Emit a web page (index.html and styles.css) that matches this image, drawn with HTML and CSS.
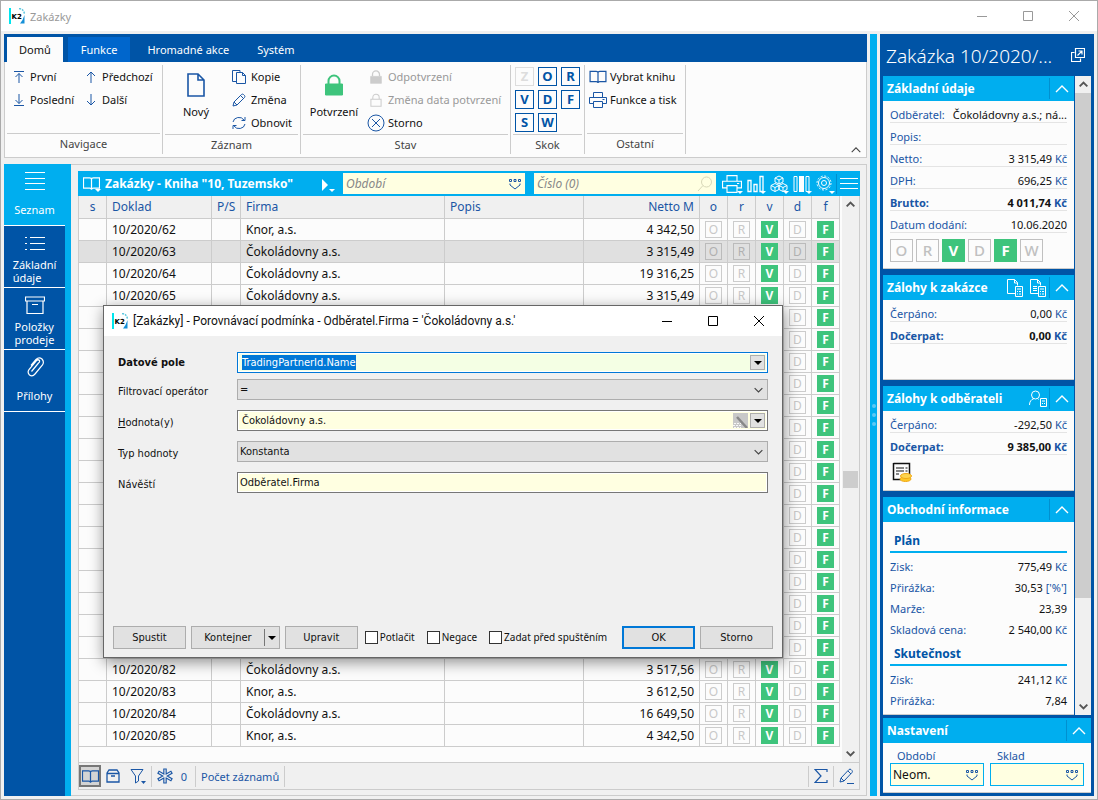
FILE: index.html
```html
<!DOCTYPE html>
<html lang="cs">
<head>
<meta charset="utf-8">
<title>Zakázky</title>
<link rel="stylesheet" href="styles.css">
</head>
<body>
<svg class="sprite" aria-hidden="true">
  <symbol id="k2" viewBox="0 0 16 16"><path d="M0 0h2v16H0z" fill="#00e5ee"/><path d="M10 0.5c3 .3 5 2 5.500 5.500" fill="none" stroke="#5cc8e0" stroke-width="1.500" stroke-dasharray="2 1"/><path d="M15.500 7v8.500H11l2.500-3.500z" fill="#1590d8"/><text x="2.500" y="10.500" font-size="7" font-weight="900" font-family="DejaVu Sans" fill="#000">K2</text></symbol>
  <symbol id="min" viewBox="0 0 12 12"><path d="M1 6.500h10"/></symbol>
  <symbol id="max" viewBox="0 0 12 12"><path d="M1.500 1.500h9v9h-9z"/></symbol>
  <symbol id="close" viewBox="0 0 12 12"><path d="M1 1l10 10M11 1L1 11"/></symbol>
  <symbol id="first" viewBox="0 0 12 14"><path d="M1 1.500h10M6 13V3.500M2.500 7L6 3.500 9.500 7"/></symbol>
  <symbol id="last" viewBox="0 0 12 14"><path d="M1 12.500h10M6 1v9.500M2.500 7L6 10.500 9.500 7"/></symbol>
  <symbol id="up" viewBox="0 0 12 14"><path d="M6 13V2M2 6l4-4 4 4"/></symbol>
  <symbol id="down" viewBox="0 0 12 14"><path d="M6 1v11M2 8l4 4 4-4"/></symbol>
  <symbol id="page" viewBox="0 0 18 24"><path d="M1 1h10l6 6v16H1zM11 1v6h6" stroke-width="1.600"/></symbol>
  <symbol id="copy" viewBox="0 0 14 14"><path d="M4 11.500H.5V.5H8V2M4.500 2.500h6l3 3v8h-9zM10.500 2.500v3h3"/></symbol>
  <symbol id="pencil" viewBox="0 0 14 14"><path d="M1 13l1-4L9.500 1.500q1-.8 2 0l1 1q.8 1 0 2L5 12zM8.500 2.500l3 3M2 9l3 3"/></symbol>
  <symbol id="refresh" viewBox="0 0 14 14"><path d="M1 6a6 5.500 0 0 1 11-2M13 1v3.500H9.500M13 8a6 5.500 0 0 1-11 2M1 13V9.500h3.500"/></symbol>
  <symbol id="lock" viewBox="0 0 20 22"><path d="M4.500 10V7a5.500 5.500 0 0 1 11 0v3" fill="none" stroke-width="2"/><path d="M1.500 10h17v11h-17z" fill="currentColor"/></symbol>
  <symbol id="lockopen" viewBox="0 0 20 22"><path d="M5 10V7a5 5 0 0 1 10 0v3M2 10h16v11H2z" stroke-width="1.600"/></symbol>
  <symbol id="cancel" viewBox="0 0 18 18"><circle cx="9" cy="9" r="8"/><path d="M5 5l8 8M13 5l-8 8"/></symbol>
  <symbol id="book" viewBox="0 0 18 15"><path d="M9 2.500V13M.5 1.500H7q2 0 2 1.500 0-1.500 2-1.500h6.500v11H11q-2 0-2 1.500 0-1.500-2-1.500H.5z" stroke-width="1.300"/></symbol>
  <symbol id="print" viewBox="0 0 18 16"><path d="M4.500 5V.5h9V5M4.500 11.500H.5V5.500h17v6h-4M4.500 9.500h9v6h-9zM13.500 7.500h2"/></symbol>
  <symbol id="lines" viewBox="0 0 20 20"><path d="M0 1.500h20M0 7.500h20M0 12.500h20M0 18.500h20"/></symbol>
  <symbol id="list" viewBox="0 0 20 20"><path d="M5 4.500h15M5 10.500h15M5 16.500h15M0 4.500h2M0 10.500h2M0 16.500h2"/></symbol>
  <symbol id="box" viewBox="0 0 20 20"><path d="M.5 2h19v4H.5zM2 6v12.500h16V6M7 9.500h6" stroke-width="1.200"/></symbol>
  <symbol id="crate" viewBox="0 0 14 14"><path d="M1 4l2-3h8l2 3v9H1zM1 4.500h12M5 7h4" stroke-width="1.300"/></symbol>
  <symbol id="clip" viewBox="0 0 18 20"><path d="M5.500 14.500l7-8.500q1.500-1 1-2.500-1.500-1.500-3 0L3 12.500q-2 3 .5 5.500 3 2 5.500-1l7.500-9q2-3-.5-6-3-2.500-6 .500L5 8.500" stroke-width="1.200"/></symbol>
  <symbol id="pick" viewBox="0 0 14 12"><path d="M1.500 1.500h2v2h-2zM6 1.500h2v2H6zM10.500 1.500h2v2h-2z" fill="none" stroke="#1a56a5"/><path d="M2 5.500V7l5 4 5-4V5.500" fill="none" stroke="#1a56a5"/></symbol>
  <symbol id="search" viewBox="0 0 16 16"><circle cx="9.500" cy="6" r="5"/><path d="M6 9.500L1 15"/></symbol>
  <symbol id="chart" viewBox="0 0 18 18"><path d="M1 5.500h3v11H1zM7 9.500h3v7H7zM13 1.500h3v15h-3z" stroke-width="1.300"/></symbol>
  <symbol id="cubes" viewBox="0 0 18 18"><path d="M9 1l4 2v4L9 9 5 7V3zM5 3l4 2 4-2M9 5v4M5 8.500l4 2v4l-4 2-4-2v-4zM1 10.500l4 2 4-2M5 12.500v4M13 8.500l4 2v4l-4 2-4-2v-4zM9 10.500l4 2 4-2M13 12.500v4"/></symbol>
  <symbol id="cols" viewBox="0 0 18 18"><path d="M1 1.500h3v15H1zM13 1.500h3v15h-3z"/><path d="M6 1h5v16H6z" fill="currentColor" stroke="none"/></symbol>
  <symbol id="gear" viewBox="0 0 18 18"><circle cx="8" cy="8" r="5.500"/><circle cx="8" cy="8" r="2.500"/><circle cx="8" cy="8" r="7" stroke-dasharray="2 1.670"/></symbol>
  <symbol id="chev" viewBox="0 0 14 8"><path d="M1 7l6-6 6 6"/></symbol>
  <symbol id="popout" viewBox="0 0 14 14"><path d="M3.500 4.500h-3v9h9v-3M4.500.500h9v9h-9zM6.500 7.500l4.500-4.500M7.500 3H11v3.500" stroke-width="1.200"/></symbol>
  <symbol id="doccalc" viewBox="0 0 17 18"><path d="M8 14.500H.5V.5h7l3 3v3M7.500.5v3.500h3M8.500 7.500h7v10h-7zM10 10h4M10 12.500h1M12 12.500h2M10 15h1M12 15h2"/></symbol>
  <symbol id="doccalc2" viewBox="0 0 17 18"><path d="M8 14.500H.5V.5h7l3 3v3M7.500.5v3.500h3M3 7.500h4M3 9.500h4M3 11.500h4M8.500 7.500h7v10h-7zM10 10h4M10 12.500h1M12 12.500h2M10 15h1M12 15h2"/></symbol>
  <symbol id="person" viewBox="0 0 18 18"><circle cx="6.500" cy="5" r="4"/><path d="M.5 15q0-5 4.500-6.500M8.500 8.500l1 1M11.500 8.500h6v8h-6zM13 11h3M13 13.500h1M15 13.500h1"/></symbol>
  <symbol id="bill" viewBox="0 0 20 20"><path d="M1.500 1.500h16V12M1.500 1v16.500H9" stroke="#111" fill="none" stroke-width="1.500"/><path d="M4 6h8M4 9h8M4 12h3M13.500 6h2M13.500 9h2" stroke="#111" stroke-width="1.200"/><ellipse cx="13.500" cy="17" rx="5.500" ry="2.500" fill="#fdc726" stroke="#f0a818"/><ellipse cx="14" cy="14" rx="5.500" ry="2.500" fill="#fdd44e" stroke="#f0a818"/></symbol>
  <symbol id="funnel" viewBox="0 0 16 16"><path d="M1 1.500h12L8.500 8v5l-3 2V8z"/><path d="M11 13h5l-2.500 3z" fill="currentColor" stroke="none"/></symbol>
  <symbol id="star" viewBox="0 0 16 16"><path d="M8 .5v15M1 4l14 8M15 4L1 12" stroke-width="3.500"/><path d="M8 1.500v13M2 4.500l12 7M14 4.500l-12 7" stroke="#f0f0f0" stroke-width="1.200"/></symbol>
  <symbol id="sigma" viewBox="0 0 14 14"><path d="M13 3V.5H1L7 7l-6 6.500h12V11" stroke-width="1.200"/></symbol>
  <symbol id="penline" viewBox="0 0 16 16"><path d="M1 14l1-4 8-8.500q1-.8 2 0l1 1q.8 1 0 2L5 13zM9 3l3 3M2 10l3 3M8 15.500h7"/></symbol>
  <symbol id="play" viewBox="0 0 14 14"><path d="M1 0l6 6-6 6z" fill="currentColor" stroke="none"/><path d="M8 10h6l-3 3z" fill="currentColor" stroke="none"/></symbol>
</svg>

<div class="window">
  <header class="titlebar">
    <svg class="i16"><use href="#k2"/></svg><span class="grow">Zakázky</span>
    <button class="wbtn" aria-label="Minimalizovat"><svg class="ico i12"><use href="#min"/></svg></button>
    <button class="wbtn" aria-label="Maximalizovat"><svg class="ico i12"><use href="#max"/></svg></button>
    <button class="wbtn" aria-label="Zavřít"><svg class="ico i12"><use href="#close"/></svg></button>
  </header>

  <div class="workspace">
    <div class="left">
      <section class="ribbon">
        <nav class="tabs">
          <button class="tab active">Domů</button><button class="tab func">Funkce</button><button class="tab">Hromadné akce</button><button class="tab">Systém</button>
        </nav>
        <div class="groups">
          <div class="group g-nav">
            <div class="tools">
              <div class="col"><button><svg class="ico ar"><use href="#first"/></svg>První</button><button><svg class="ico ar"><use href="#last"/></svg>Poslední</button></div>
              <div class="col"><button><svg class="ico ar"><use href="#up"/></svg>Předchozí</button><button><svg class="ico ar"><use href="#down"/></svg>Další</button></div>
            </div>
            <h3>Navigace</h3>
          </div>
          <div class="group g-rec">
            <div class="tools">
              <button class="big"><svg class="ico page"><use href="#page"/></svg>Nový</button>
              <div class="col"><button><svg class="ico i14"><use href="#copy"/></svg>Kopie</button><button><svg class="ico i14"><use href="#pencil"/></svg>Změna</button><button><svg class="ico i14"><use href="#refresh"/></svg>Obnovit</button></div>
            </div>
            <h3>Záznam</h3>
          </div>
          <div class="group g-state">
            <div class="tools">
              <button class="big"><svg class="ico biglock"><use href="#lock"/></svg>Potvrzení</button>
              <div class="col wide"><button disabled><svg class="ico i14"><use href="#lock"/></svg>Odpotvrzení</button><button disabled><svg class="ico i14"><use href="#lockopen"/></svg>Změna data potvrzení</button><button><svg class="ico i18"><use href="#cancel"/></svg>Storno</button></div>
            </div>
            <h3>Stav</h3>
          </div>
          <div class="group g-jump">
            <div class="letters"><button disabled>Z</button><button>O</button><button>R</button><button>V</button><button>D</button><button>F</button><button>S</button><button>W</button></div>
            <h3>Skok</h3>
          </div>
          <div class="group g-other">
            <div class="tools">
              <div class="col wide"><button><svg class="ico i14"><use href="#book"/></svg>Vybrat knihu</button><button><svg class="ico i18"><use href="#print"/></svg>Funkce a tisk</button></div>
            </div>
            <h3>Ostatní</h3>
          </div>
          <button class="fold" aria-label="Sbalit"><svg class="ico fchev"><use href="#chev"/></svg></button>
        </div>
      </section>

      <div class="content">
        <nav class="side">
          <button class="on"><svg class="ico"><use href="#lines"/></svg><span>Seznam</span></button>
          <button><svg class="ico"><use href="#list"/></svg><span>Základní<br>údaje</span></button>
          <button><svg class="ico"><use href="#box"/></svg><span>Položky<br>prodeje</span></button>
          <button><svg class="ico"><use href="#clip"/></svg><span>Přílohy</span></button>
        </nav>
        <main class="frame">
          <div class="bar">
            <button class="dd" aria-label="Kniha"><svg class="ico" width="17" height="15"><use href="#book"/></svg></button>
            <h1>Zakázky - Kniha "10, Tuzemsko"</h1>
            <button class="play" aria-label="Další kniha"><svg class="ico i14"><use href="#play"/></svg></button>
            <div class="find"><input type="text" placeholder="Období" aria-label="Období"><svg class="ico pick"><use href="#pick"/></svg></div>
            <div class="find"><input type="text" placeholder="Číslo (0)" aria-label="Číslo"><svg class="ico i16 glass"><use href="#search"/></svg></div>
            <div class="acts">
              <button class="dd" aria-label="Tisk"><svg class="ico" width="20" height="18"><use href="#print"/></svg></button>
              <button class="dd" aria-label="Graf"><svg class="ico i18"><use href="#chart"/></svg></button>
              <button class="dd" aria-label="Kostky"><svg class="ico i18"><use href="#cubes"/></svg></button>
              <button class="dd" aria-label="Sloupce"><svg class="ico i18"><use href="#cols"/></svg></button>
              <button class="dd" aria-label="Nastavení"><svg class="ico i18"><use href="#gear"/></svg></button>
              <button class="menu" aria-label="Nabídka"><i></i><i></i><i></i></button>
            </div>
          </div>
          <div class="grid">
            <div class="sheet">
              <table>
                <colgroup><col class="c-s"><col class="c-doc"><col class="c-ps"><col class="c-firm"><col><col class="c-net"><col class="c-b"><col class="c-b"><col class="c-b"><col class="c-b"><col class="c-b"></colgroup>
                <thead><tr><th class="mid">s</th><th>Doklad</th><th>P/S</th><th>Firma</th><th>Popis</th><th class="num">Netto M</th><th class="mid">o</th><th class="mid">r</th><th class="mid">v</th><th class="mid">d</th><th class="mid">f</th></tr></thead>
                <tbody id="rows"></tbody>
              </table>
            </div>
            <div class="scroll"><svg class="ico arr"><use href="#chev"/></svg><div class="track"><div class="sp1"></div><div class="thumb"></div><div class="sp2"></div></div><svg class="ico arr flip"><use href="#chev"/></svg></div>
          </div>
          <footer class="status">
            <button class="cur" aria-label="Kniha"><svg class="ico" width="17" height="15"><use href="#book"/></svg></button>
            <button aria-label="Kontejner"><svg class="ico i14"><use href="#crate"/></svg></button>
            <button class="filter" aria-label="Filtr"><svg class="ico i16"><use href="#funnel"/></svg></button>
            <div class="sep"></div>
            <svg class="ico i16"><use href="#star"/></svg><span class="zero">0</span>
            <div class="sep"></div>
            <span>Počet záznamů</span>
            <div class="sep"></div>
            <div class="grow"></div>
            <div class="sep"></div>
            <button aria-label="Součet"><svg class="ico i14"><use href="#sigma"/></svg></button>
            <div class="sep"></div>
            <button aria-label="Upravit"><svg class="ico i16"><use href="#penline"/></svg></button>
          </footer>
        </main>
      </div>
    </div>

    <div class="splitter"><i></i><i></i><i></i></div>

    <aside class="panel">
      <div class="phead"><h2>Zakázka 10/2020/...</h2><button aria-label="Otevřít"><svg class="ico i14"><use href="#popout"/></svg></button></div>
      <div class="pbody">
        <div class="cards">
          <section class="card s1">
            <header><h2>Základní údaje</h2><button aria-label="Sbalit"><svg class="ico chev"><use href="#chev"/></svg></button></header>
            <div class="in">
              <p><span>Odběratel:</span><b>Čokoládovny a.s.; ná...</b></p>
              <p><span>Popis:</span></p>
              <p><span>Netto:</span><b>3 315,49 <em>Kč</em></b></p>
              <p><span>DPH:</span><b>696,25 <em>Kč</em></b></p>
              <p class="strong"><span>Brutto:</span><b>4 011,74 <em>Kč</em></b></p>
              <p><span>Datum dodání:</span><b>10.06.2020</b></p>
              <div class="flags"><i>O</i><i>R</i><i class="ok">V</i><i>D</i><i class="ok">F</i><i>W</i></div>
            </div>
          </section>
          <section class="card s2">
            <header><h2>Zálohy k zakázce</h2><svg class="ico" width="17" height="18"><use href="#doccalc"/></svg><svg class="ico" width="17" height="18"><use href="#doccalc2"/></svg><button aria-label="Sbalit"><svg class="ico chev"><use href="#chev"/></svg></button></header>
            <div class="in">
              <p><span>Čerpáno:</span><b>0,00 <em>Kč</em></b></p>
              <p class="strong"><span>Dočerpat:</span><b>0,00 <em>Kč</em></b></p>
            </div>
          </section>
          <section class="card s3">
            <header><h2>Zálohy k odběrateli</h2><svg class="ico i18"><use href="#person"/></svg><button aria-label="Sbalit"><svg class="ico chev"><use href="#chev"/></svg></button></header>
            <div class="in">
              <p><span>Čerpáno:</span><b>-292,50 <em>Kč</em></b></p>
              <p class="strong"><span>Dočerpat:</span><b>9 385,00 <em>Kč</em></b></p>
              <svg class="ico bill"><use href="#bill"/></svg>
            </div>
          </section>
          <section class="card s4">
            <header><h2>Obchodní informace</h2><button aria-label="Sbalit"><svg class="ico chev"><use href="#chev"/></svg></button></header>
            <div class="in">
              <h3>Plán</h3>
              <p><span>Zisk:</span><b>775,49 <em>Kč</em></b></p>
              <p><span>Přirážka:</span><b>30,53 <em>['%']</em></b></p>
              <p><span>Marže:</span><b>23,39</b></p>
              <p><span>Skladová cena:</span><b>2 540,00 <em>Kč</em></b></p>
              <h3>Skutečnost</h3>
              <p><span>Zisk:</span><b>241,12 <em>Kč</em></b></p>
              <p><span>Přirážka:</span><b>7,84</b></p>
            </div>
          </section>
        </div>
        <div class="scroll pscroll"><svg class="ico arr"><use href="#chev"/></svg><div class="track"><div class="thumb"></div><div class="sp2"></div></div><svg class="ico arr flip"><use href="#chev"/></svg></div>
      </div>
      <section class="card setup">
        <header><h2>Nastavení</h2><button aria-label="Sbalit"><svg class="ico chev"><use href="#chev"/></svg></button></header>
        <div class="in two">
          <div class="opt"><label for="per">Období</label><div class="box"><input id="per" type="text" size="4" value="Neom."><svg class="ico pick"><use href="#pick"/></svg></div></div>
          <div class="opt"><label for="skl">Sklad</label><div class="box"><input id="skl" type="text" size="4"><svg class="ico pick"><use href="#pick"/></svg></div></div>
        </div>
      </section>
    </aside>
  </div>

  <form class="dialog" role="dialog" aria-labelledby="dt" onsubmit="return false">
    <header class="dtitle">
      <svg class="i16"><use href="#k2"/></svg><span class="grow" id="dt">[Zakázky] - Porovnávací podmínka - Odběratel.Firma = 'Čokoládovny a.s.'</span>
      <button type="button" class="wbtn" aria-label="Minimalizovat"><svg class="ico i12"><use href="#min"/></svg></button>
      <button type="button" class="wbtn" aria-label="Maximalizovat"><svg class="ico i12"><use href="#max"/></svg></button>
      <button type="button" class="wbtn" aria-label="Zavřít"><svg class="ico i12"><use href="#close"/></svg></button>
    </header>
    <div class="fields">
      <div class="field first"><label for="f1">Datové pole</label><div class="ctl focus"><input id="f1" type="text" value="TradingPartnerId.Name"><button type="button" class="drop" aria-label="Rozbalit"></button></div></div>
      <div class="field"><label for="f2">Filtrovací operátor</label><div class="sel"><select id="f2"><option>=</option></select><svg class="ico dchev"><use href="#chev"/></svg></div></div>
      <div class="field"><label for="f3"><u>H</u>odnota(y)</label><div class="ctl"><input id="f3" type="text" value="Čokoládovny a.s."><button type="button" class="wand" aria-label="Průvodce"><svg width="15" height="15"><path d="M4 4l10 11" stroke="#888" stroke-width="2.500"/><path d="M1 10.500h7M0 12.500h9M1 14.500h7" stroke="#f8f8f8" stroke-dasharray="2 1"/></svg></button><button type="button" class="drop" aria-label="Rozbalit"></button></div></div>
      <div class="field"><label for="f4">Typ hodnoty</label><div class="sel"><select id="f4"><option>Konstanta</option></select><svg class="ico dchev"><use href="#chev"/></svg></div></div>
      <div class="field"><label for="f5">Návěští</label><div class="ctl plain"><input id="f5" type="text" value="Odběratel.Firma"></div></div>
    </div>
    <div class="dfoot">
      <button type="button" class="btn">Spustit</button>
      <button type="button" class="btn split"><span>Kontejner</span><i></i></button>
      <button type="button" class="btn">Upravit</button>
      <label class="chk"><input type="checkbox">Potlačit</label>
      <label class="chk"><input type="checkbox">Negace</label>
      <label class="chk"><input type="checkbox">Zadat před spuštěním</label>
      <span class="grow"></span>
      <button type="submit" class="btn def">OK</button>
      <button type="button" class="btn">Storno</button>
    </div>
  </form>
</div>
<script src="rows.js"></script>
</body>
</html>
```
FILE: rows.js
```js
const known = {
  62: ["Knor, a.s.", "4 342,50"],
  63: ["Čokoládovny a.s.", "3 315,49"],
  64: ["Čokoládovny a.s.", "19 316,25"],
  65: ["Čokoládovny a.s.", "3 315,49"],
  82: ["Čokoládovny a.s.", "3 517,56"],
  83: ["Knor, a.s.", "3 612,50"],
  84: ["Čokoládovny a.s.", "16 649,50"],
  85: ["Knor, a.s.", "4 342,50"]
};
const flag = (t) => `<td class="flag"><i${t === "V" || t === "F" ? ' class="ok"' : ""}>${t}</i></td>`;
let html = "";
for (let n = 62; n <= 85; n++) {
  const [firm, net] = known[n] || ["", ""];
  const doc = known[n] ? "10/2020/" + n : "";
  const flags = known[n] ? ["O", "R", "V", "D", "F"].map(flag).join("") : "<td></td><td></td><td></td>" + flag("D") + flag("F");
  html += `<tr${n === 63 ? ' class="sel-row"' : ""}><td></td><td>${doc}</td><td></td><td>${firm}</td><td></td><td class="num">${net}</td>${flags}</tr>`;
}
document.getElementById("rows").innerHTML = html;

const field = document.getElementById("f1");
field.focus();
field.select();
```
FILE: styles.css
```css
:root {
  --blue: #0054a6;
  --cyan: #00aeef;
  --ink: #1a56a5;
  --green: #3ec47c;
  --line: #cccccc;
  --field: #ffffe1;
}
* { box-sizing: border-box; }
body, h1, h2, h3, p { margin: 0; }
body { font: 11px/15px "Noto Sans", "Open Sans", sans-serif; color: #111; background: #f0f0f0; }
button { font: inherit; color: inherit; background: none; border: 0; padding: 0; margin: 0; white-space: nowrap; }
input, select { font: inherit; color: inherit; border: 0; margin: 0; padding: 0; min-width: 0; outline: 0; background: none; }
i, em { font-style: normal; }
.sprite { position: absolute; width: 0; height: 0; }
svg { display: block; flex: none; }
.ico { fill: none; stroke: currentColor; }
.i12 { width: 12px; height: 12px; }
.i14 { width: 14px; height: 14px; }
.i16 { width: 16px; height: 16px; }
.i18 { width: 18px; height: 18px; }
.grow { flex: 1; }

.window { position: relative; display: flex; flex-direction: column; min-height: 100vh; border: 1px solid #aaa; }
.titlebar { display: flex; align-items: center; height: 30px; background: #fff; color: #999; padding-left: 8px; }
.titlebar .grow { padding-left: 5px; }
.wbtn { width: 46px; height: 29px; display: flex; align-items: center; justify-content: center; color: #999; }
.workspace { flex: 1; display: flex; padding: 3px; }
.left { flex: 1; min-width: 0; display: flex; flex-direction: column; gap: 6px; }

.tabs { display: flex; height: 28px; background: var(--blue); padding: 3px 0 0 3px; color: #fff; }
.tab { padding: 0 14px; height: 25px; }
.tab.active { background: #fcfcfc; color: #111; padding: 0 12px; margin-right: 5px; }
.tab.func { background: #0066cc; padding: 0 13px; margin-right: 3px; }
.groups { display: flex; background: #fcfcfc; border: 1px solid var(--line); border-top: 0; height: 96px; padding: 3px 0; }
.group { display: flex; flex-direction: column; border-right: 1px solid var(--line); padding: 0 2px; }
.group h3 { margin-top: auto; border-top: 1px solid var(--line); font-size: 11px; font-weight: 400; text-align: center; height: 21px; line-height: 20px; color: #444; }
.tools { display: flex; }
.col { display: flex; flex-direction: column; }
.col button { display: flex; align-items: center; gap: 5px; height: 23px; }
.col svg { color: var(--ink); }
.wide button svg { width: 18px; }
.wide button { gap: 3px; }
.ar { width: 12px; height: 14px; }
button:disabled { color: #999; }
button:disabled svg { color: #ccc; }
.g-nav { width: 158px; }
.g-nav .tools { padding-left: 6px; gap: 11px; }
.g-rec { width: 138px; }
.g-rec .big { width: 62px; margin-right: 5px; }
.big { display: flex; flex-direction: column; align-items: center; gap: 7px; padding-top: 8px; }
.page { width: 18px; height: 24px; color: var(--ink); }
.g-state { width: 210px; }
.g-state .big { width: 62px; margin-right: 2px; }
.biglock { width: 20px; height: 24px; color: var(--green); }
.g-jump { width: 74px; }
.letters { display: grid; grid-template-columns: repeat(3, 19px); gap: 4px; padding: 2px; }
.letters button { height: 19px; border: 1px solid var(--blue); color: var(--blue); font-weight: 700; font-size: 13px; line-height: 17px; }
.letters button:disabled { border-color: #ddd; color: #ddd; }
.g-other { width: 101px; }
.g-other .tools { padding-left: 2px; }
.fold { margin-left: auto; align-self: flex-end; padding-right: 5px; color: #444; }
.fchev { width: 10px; height: 8px; stroke-width: 1.5; }

.content { flex: 1; display: flex; }
.side { width: 67px; background: var(--blue); border-right: 6px solid var(--cyan); color: #fff; }
.side button { display: flex; flex-direction: column; align-items: center; width: 61px; height: 62px; border-bottom: 1px solid #fff; }
.side button svg { width: 20px; height: 20px; margin: 7px 0 5px; }
.side button span { flex: 1; text-align: left; line-height: 13px; display: flex; align-items: center; padding-bottom: 3px; }
.side .on { background: var(--cyan); }

.frame { flex: 1; min-width: 0; display: flex; flex-direction: column; border: 1px solid var(--line); border-left: 0; padding: 6px 6px 5px 7px; }
.bar { display: flex; align-items: center; height: 25px; background: var(--cyan); color: #fff; padding: 0 2px 0 5px; }
.bar h1 { font-size: 12px; font-weight: 700; margin-left: 5px; width: 211px; white-space: nowrap; }
.play { padding: 4px 8px 0 5px; width: 27px; }
.find { flex: 1; display: flex; align-items: center; height: 21px; background: var(--field); padding: 0 3px; margin-right: 9px; color: #444; }
.find:nth-of-type(2) { margin-right: 6px; }
.find input { flex: 1; }
.find input::placeholder { color: #888; font-style: italic; font-size: 12px; }
.pick { width: 14px; height: 12px; }
.glass { color: #d8d8b8; }
.acts { display: flex; align-items: center; gap: 5px; }
.dd { position: relative; }
.dd::after { content: ""; position: absolute; right: -1px; bottom: -1px; border: 3px solid transparent; border-top-color: #fff; border-bottom: 0; }
.menu { width: 22px; margin-left: -3px; padding-left: 3px; height: 20px; border-left: 1px solid #0090d0; display: flex; flex-direction: column; justify-content: space-evenly; }
.menu i { height: 1px; background: #fff; }

.grid { flex: 1; display: flex; background: #fcfcfc; border: 1px solid var(--line); border-top: 0; }
.sheet { flex: 1; min-width: 0; padding-right: 2px; }
table { width: 100%; table-layout: fixed; border-spacing: 0; font-size: 12px; }
.c-s { width: 28px; } .c-doc { width: 105px; } .c-ps { width: 29px; } .c-firm { width: 204px; } .c-net { width: 116px; } .c-b { width: 28px; }
th, td { height: 22px; padding: 0 5px; border: solid var(--line); border-width: 0 1px 1px 0; line-height: 18px; white-space: nowrap; text-align: left; font-weight: 400; }
th { height: 23px; background: #f0f0f0; color: var(--ink); }
th.num, td.num { text-align: right; }
th.mid { text-align: center; padding: 0; }
.sel-row td { background: #e0e0e0; }
.flag i { display: block; width: 17px; height: 17px; border: 1px solid var(--line); color: #c8c8c8; font-size: 12px; line-height: 15px; text-align: center; }
.sel-row .flag i:not(.ok) { border-color: #bbb; color: #b0b0b0; }
.flag .ok, .flags .ok { background: var(--green); border-color: var(--green); color: #fff; font-weight: 700; }

.scroll { width: 17px; display: flex; flex-direction: column; align-items: center; background: #f0f0f0; }
.arr { width: 9px; height: 17px; color: #555; stroke-width: 3; }
.flip { transform: scaleY(-1); }
.track { flex: 1; align-self: stretch; display: flex; flex-direction: column; padding: 0 1px; }
.sp1 { flex: 25; }
.sp2 { flex: 25; }
.track .thumb { height: 17px; background: #cdcdcd; }

.status { display: flex; align-items: center; gap: 5px; height: 27px; border: 1px solid var(--line); border-top: 0; padding-right: 4px; color: var(--ink); }
.status .cur { width: 22px; height: 22px; border: 2px solid #777; background: #d4d4d4; display: flex; align-items: center; justify-content: center; }
.status .filter { margin-left: 5px; }
.sep { width: 1px; height: 21px; background: var(--line); }
.zero { width: 12px; text-align: center; }

.splitter { width: 7px; margin: 0 3px; background: var(--cyan); display: flex; flex-direction: column; align-items: center; justify-content: center; gap: 5px; }
.splitter i { width: 4px; height: 4px; border-radius: 2px; background: #5cc8f5; }

.panel { width: 214px; background: var(--blue); padding: 0 3px 3px; display: flex; flex-direction: column; }
.phead { height: 42px; display: flex; align-items: center; justify-content: space-between; color: #fff; padding: 0 6px 0 3px; }
.phead h2 { font-size: 19px; line-height: 26px; font-weight: 300; white-space: nowrap; padding-top: 2px; }
.pbody { flex: 1; display: flex; gap: 1px; }
.cards { flex: 1; display: flex; flex-direction: column; gap: 6px; }
.card { background: #fcfcfc; border-bottom: 1px solid var(--line); }
.card header { height: 25px; display: flex; align-items: center; gap: 6px; background: var(--cyan); color: #fff; padding-left: 4px; }
.card header h2 { flex: 1; font-size: 12px; font-weight: 700; white-space: nowrap; }
.card header button { width: 25px; height: 21px; border-left: 1px solid #0090d0; display: flex; align-items: center; justify-content: center; margin-left: -4px; }
.chev { width: 14px; height: 8px; stroke-width: 1.4; }
.in { padding: 0 7px; color: var(--ink); }
.in p { display: flex; justify-content: space-between; height: 22px; line-height: 27px; border-bottom: 1px solid #e4e4e4; }
.in b { font-weight: 400; color: #111; white-space: nowrap; }
.in em { color: var(--ink); }
.in .strong, .in .strong b { font-weight: 700; }
.s1 { height: 193px; }
.s2, .s3 { height: 105px; }
.s4 { flex: 1; }
.flags { display: flex; gap: 3px; padding-top: 6px; }
.flags i { width: 23px; height: 23px; border: 1px solid #c0c0c0; color: #c0c0c0; font-size: 15px; line-height: 21px; text-align: center; font-weight: 500; }
.s4 .in { padding-top: 5px; }
.s4 p { height: 21px; line-height: 21px; border: 0; }
.s4 h3 { font-size: 12px; height: 26px; line-height: 28px; padding-left: 4px; border-bottom: 2px solid var(--cyan); color: var(--blue); margin-bottom: 3px; }
.bill { width: 20px; height: 20px; margin: 7px 0 0 2px; }
.pscroll { width: 16px; }
.pscroll .track { padding: 0; }
.pscroll .thumb { flex: 126; height: auto; }
.setup { margin-top: 3px; }
.two { display: flex; gap: 6px; padding: 5px 7px 6px; }
.opt { flex: 1; min-width: 0; }
.opt label { display: block; padding-left: 7px; }
.box { display: flex; align-items: center; height: 23px; border: 1px solid var(--cyan); background: var(--field); color: #111; padding: 0 4px 0 2px; font-size: 12px; }
.box input { flex: 1; }

.dialog { position: absolute; left: 102px; right: 314px; top: 304px; height: 353px; display: flex; flex-direction: column; border: 1px solid #666; background: #f0f0f0; box-shadow: 1px 4px 14px rgba(0, 0, 0, 0.45); font-family: "DejaVu Sans Condensed", "DejaVu Sans", sans-serif; }
.dtitle { display: flex; align-items: center; height: 30px; background: #fff; padding-left: 8px; font: 12px/16px Roboto, "Noto Sans", sans-serif; }
.dtitle .grow { padding-left: 5px; white-space: nowrap; }
.dialog .wbtn { color: #000; }
.fields { flex: 1; display: flex; flex-direction: column; gap: 10px; padding: 16px 14px 0; }
.field { display: flex; }
.field > label { width: 119px; line-height: 25px; height: 21px; }
.field.first { margin-bottom: -4px; }
.field.first > label { font-weight: 700; line-height: 21px; }
.ctl, .sel { flex: 1; height: 21px; border: 1px solid #777; background: var(--field); display: flex; align-items: center; gap: 2px; padding: 0 2px 0 4px; box-shadow: inset 0 0 0 1px #fff; }
.ctl input { flex: 1; height: 15px; }
.ctl.focus { border-color: #0078d7; background: #f4ffe4; }
.ctl.plain { padding-left: 2px; }
.sel { border-color: #adadad; background: #e1e1e1; box-shadow: none; padding: 0 4px 0 2px; }
.sel select { flex: 1; appearance: none; }
.dchev { width: 9px; height: 6px; transform: scaleY(-1); color: #444; stroke-width: 1.8; }
#f1::selection { background: #0078d7; color: #fff; }
#f1 { caret-color: #f07020; }
.drop, .wand { width: 15px; height: 15px; border: 1px solid #adadad; background: #e1e1e1; display: flex; align-items: center; justify-content: center; }
.wand { border: 0; background: #c8c8c8; }
.drop::after, .split i { content: ""; width: 0; border: 4px solid transparent; border-top-color: #000; border-bottom: 0; }
.dfoot { display: flex; align-items: center; gap: 5px; padding: 0 9px 8px; }
.btn { width: 73px; height: 23px; border: 1px solid #adadad; background: #e1e1e1; }
.btn.def { border: 2px solid #0078d7; }
.btn.split { width: 89px; display: flex; align-items: center; }
.split span { flex: 1; border-right: 1px solid #777; line-height: 17px; }
.split i { margin: 0 3px; }
.chk { display: flex; align-items: center; gap: 2px; margin: 0 5px 0 2px; white-space: nowrap; font-family: "Noto Sans", sans-serif; font-size: 10px; }
.chk input { appearance: none; width: 13px; height: 13px; border: 1px solid #333; background: #fff; }
```
